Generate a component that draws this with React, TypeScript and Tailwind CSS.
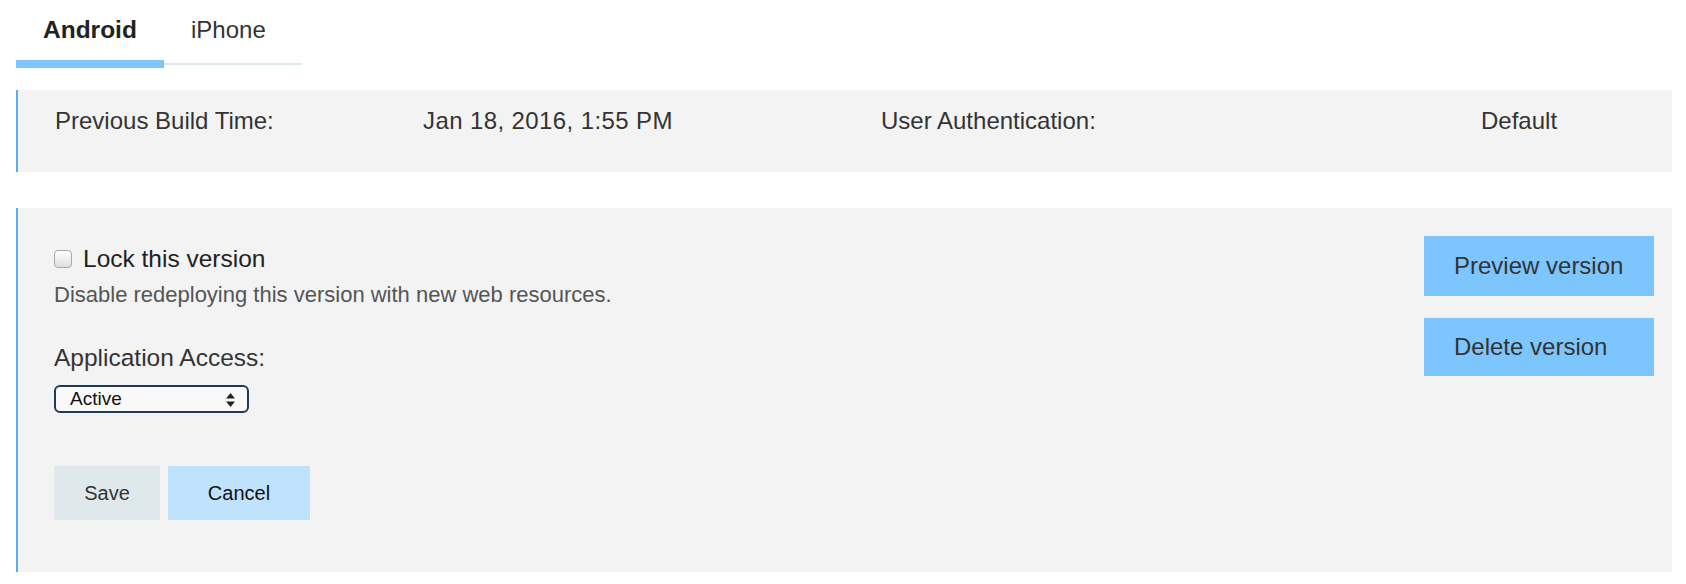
import React from "react"

const font = { fontFamily: '"Liberation Sans", Arial, sans-serif' }

function Tabs() {
	return (
		<div className="flex flex-col">
			<div className="flex h-[60px]">
				<div className="w-[148px] pl-[27px] pt-[15px] text-[24.5px] leading-[30px] font-bold text-[#222]">Android</div>
				<div className="w-[138px] pl-[27px] pt-[15px] text-[24px] leading-[30px] text-[#333]">iPhone</div>
			</div>
			<div className="flex h-[8px] items-center">
				<div className="h-[8px] w-[148px] bg-[#7dc5fd]" />
				<div className="h-[2px] w-[138px] bg-[#dde8ea]" />
			</div>
		</div>
	)
}

function InfoPanel() {
	return (
		<div className="mt-[22px] h-[82px] border-l-2 border-[#5eaaf0] bg-[#f3f3f3] pl-[37px] pt-[16px]">
			<div className="grid grid-cols-[368px_458px_600px_1fr] text-[24px] leading-[30px] text-[#333]">
				<div>Previous Build Time:</div>
				<div className="tracking-[0.4px]">Jan 18, 2016, 1:55 PM</div>
				<div>User Authentication:</div>
				<div>Default</div>
			</div>
		</div>
	)
}

function Checkbox() {
	return (
		<span className="inline-block h-[18px] w-[18px] rounded-[4px] border border-[#a9a9a9] bg-gradient-to-b from-white to-[#dedede] shadow-[inset_0_1px_0_rgba(255,255,255,0.8)]" />
	)
}

function SelectBox() {
	return (
		<div className="mt-[12px] flex h-[28px] w-[195px] items-center justify-between rounded-[6px] border-2 border-[#1e3a54] bg-[#f9f9f9] pl-[14px] pr-[12px]">
			<span className="text-[19px] leading-[20px] text-[#111]">Active</span>
			<svg width="9" height="14" viewBox="0 0 9 14" className="mt-[1px]">
				<path d="M4.5 0 L9 5.5 L0 5.5 Z" fill="#222" />
				<path d="M4.5 14 L9 8.5 L0 8.5 Z" fill="#222" />
			</svg>
		</div>
	)
}

function VersionPanel() {
	return (
		<div className="mt-[36px] flex h-[364px] justify-between border-l-2 border-[#5eaaf0] bg-[#f3f3f3] pl-[36px] pr-[18px]">
			<div className="flex flex-col pt-[36px]">
				<label className="flex h-[30px] items-center gap-[11px]">
					<Checkbox />
					<span className="text-[24.5px] leading-[30px] text-[#222]">Lock this version</span>
				</label>
				<div className="mt-[9px] text-[22px] leading-[24px] text-[#555]">
					Disable redeploying this version with new web resources.
				</div>
				<div className="mt-[36px] text-[24.5px] leading-[30px] text-[#333]">Application Access:</div>
				<SelectBox />
				<div className="mt-[53px] flex gap-[8px]">
					<button className="h-[54px] w-[106px] bg-[#dfe8ea] text-[20px] text-[#333]">Save</button>
					<button className="h-[54px] w-[142px] bg-[#bfe3fd] text-[20px] text-[#111]">Cancel</button>
				</div>
			</div>
			<div className="flex flex-col gap-[22px] pt-[28px]">
				<button className="h-[60px] w-[230px] bg-[#7dc5fd] pl-[30px] text-left text-[24px] text-[#333]">
					Preview version
				</button>
				<button className="h-[58px] w-[230px] bg-[#7dc5fd] pl-[30px] text-left text-[24px] text-[#333]">
					Delete version
				</button>
			</div>
		</div>
	)
}

export default function App() {
	return (
		<div className="min-h-[584px] bg-white pl-[16px] pr-[14px]" style={font}>
			<Tabs />
			<InfoPanel />
			<VersionPanel />
		</div>
	)
}
